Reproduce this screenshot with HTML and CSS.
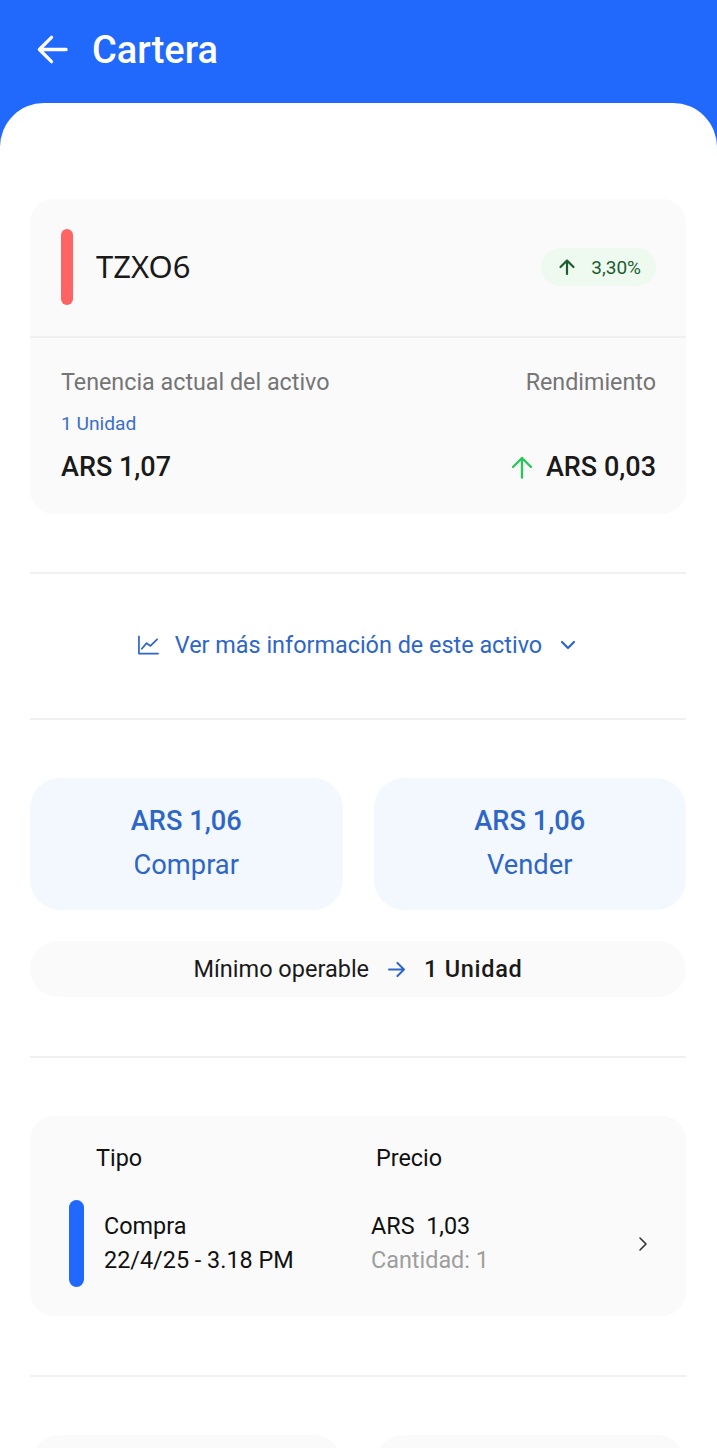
FILE: index.html
```html
<!DOCTYPE html>
<html lang="es">
<head>
<meta charset="UTF-8" />
<meta name="viewport" content="width=device-width, initial-scale=1" />
<title>Cartera</title>
<link rel="stylesheet" href="styles.css">
</head>
<body>
  <header class="topbar">
    <svg class="back-icon" viewBox="0 0 34 34" aria-hidden="true"><path d="M31 17H4M16 4.500 3.500 17 16 29.500" /></svg>
    <h1>Cartera</h1>
  </header>

  <main class="sheet">
    <section class="card holding">
      <div class="holding-head">
        <span class="bar bar-red"></span>
        <span class="ticker">TZXO6</span>
        <span class="badge">
          <svg viewBox="0 0 18 18" aria-hidden="true"><path d="M9 16V2.500M2.500 9 9 2.500 15.500 9" /></svg>
          3,30%
        </span>
      </div>
      <div class="holding-body">
        <div class="holding-col">
          <span class="muted-label">Tenencia actual del activo</span>
          <span class="units">1 Unidad</span>
          <span class="amount">ARS 1,07</span>
        </div>
        <div class="holding-col holding-col-right">
          <span class="muted-label">Rendimiento</span>
          <span class="amount">
            <svg class="gain-icon" viewBox="0 0 22 22" aria-hidden="true"><path d="M11 21.500V2M2 11 11 2 20 11" /></svg>
            ARS 0,03
          </span>
        </div>
      </div>
    </section>

    <hr class="divider">

    <div class="more-info">
      <svg class="chart-icon" viewBox="0 0 22 20" aria-hidden="true"><path d="M1 1V19H21M4 14 9 8 13 11 20 4" /></svg>
      <span>Ver más información de este activo</span>
      <svg class="chevron-down" viewBox="0 0 16 10" aria-hidden="true"><path d="M2 2 8 8 14 2" /></svg>
    </div>

    <hr class="divider divider-flush">

    <div class="actions">
      <div class="action">
        <span class="action-price">ARS 1,06</span>
        <span class="action-label">Comprar</span>
      </div>
      <div class="action">
        <span class="action-price">ARS 1,06</span>
        <span class="action-label">Vender</span>
      </div>
    </div>

    <div class="minimum">
      <span>Mínimo operable</span>
      <svg viewBox="0 0 18 16" aria-hidden="true"><path d="M1 8H17M10 1 17 8 10 15" /></svg>
      <strong>1 Unidad</strong>
    </div>

    <hr class="divider divider-wide">

    <section class="card orders">
      <div class="orders-head">
        <span class="col-type">Tipo</span>
        <span>Precio</span>
      </div>
      <div class="order-row">
        <span class="bar bar-blue"></span>
        <div class="order-type">
          <span>Compra</span>
          <span>22/4/25 - 3.18 PM</span>
        </div>
        <div class="order-price">
          <span>ARS&nbsp; 1,03</span>
          <span class="qty">Cantidad: 1</span>
        </div>
        <svg class="chevron-right" viewBox="0 0 10 16" aria-hidden="true"><path d="M2 2 8 8 2 14" /></svg>
      </div>
    </section>

    <hr class="divider divider-wide">

    <div class="actions">
      <div class="action action-grey"></div>
      <div class="action action-grey"></div>
    </div>
  </main>
</body>
</html>
```

FILE: styles.css
```css
* {
  box-sizing: border-box;
}
html,
body {
  height: 1448px;
  overflow: hidden;
}
body {
  margin: 0;
  background: #2168fd;
  font-family: Roboto, 'Liberation Sans', sans-serif;
  color: #1a1a1a;
}
svg {
  fill: none;
  stroke: currentColor;
  stroke-linecap: round;
  stroke-linejoin: round;
}

/* Top bar */
.topbar {
  height: 103px;
  padding: 0 0 4px 36px;
  display: flex;
  align-items: center;
  gap: 23px;
  color: white;
}
.topbar h1 {
  margin: 0;
  font-size: 38px;
  font-weight: 500;
}
.back-icon {
  width: 33px;
  height: 33px;
  stroke-width: 3.4;
}

.sheet {
  height: 1345px;
  overflow: hidden;
  padding: 96px 31px 0 30px;
  background: white;
  border-radius: 44px 44px 0 0;
}
.card {
  background: #fafafa;
  border-radius: 24px;
}
.bar {
  display: block;
  flex: none;
  border-radius: 8px;
}
.bar-red {
  width: 12px;
  height: 76px;
  background: #ff6464;
}
.bar-blue {
  width: 15px;
  height: 87px;
  background: #2168fd;
}

/* Holding card */
.holding {
  height: 315px;
}
.holding-head {
  height: 139px;
  padding: 0 30px 1px 31px;
  display: flex;
  align-items: center;
  border-bottom: 2px solid #f0f0f0;
}
.ticker {
  margin: 0 0 2px 23px;
  font-family: 'Noto Sans', sans-serif;
  font-size: 31px;
  color: #1a1a1a;
}
.badge {
  margin-left: auto;
  height: 38px;
  padding: 0 15px 0 17px;
  display: flex;
  align-items: center;
  gap: 15px;
  background: #eefaf0;
  border-radius: 19px;
  font-size: 19px;
  color: #1d5c32;
}
.badge svg {
  width: 18px;
  height: 18px;
  stroke-width: 2.2;
}
.holding-body {
  padding: 29px 30px 0 31px;
  display: flex;
  justify-content: space-between;
}
.holding-col {
  display: flex;
  flex-direction: column;
}
.holding-col-right {
  align-items: flex-end;
  justify-content: space-between;
}
.muted-label {
  font-size: 23.300px;
  line-height: 30px;
  color: #757575;
}
.units {
  margin-top: 15px;
  font-size: 19.200px;
  line-height: 24px;
  color: #3a6fca;
}
.amount {
  margin-top: 14px;
  display: flex;
  align-items: center;
  gap: 13px;
  font-size: 27px;
  line-height: 34px;
  font-weight: 500;
}
.gain-icon {
  width: 22px;
  height: 24px;
  color: #2dc45e;
  stroke-width: 2.4;
}

.divider {
  margin: 58px 0 0;
  border: 0;
  border-top: 2px solid #f0f0f0;
}
.divider-flush {
  margin-top: 0;
}
.divider-wide {
  margin-top: 59px;
}

/* More info link */
.more-info {
  height: 144px;
  padding: 0 2px 2px 0;
  display: flex;
  align-items: center;
  justify-content: center;
  gap: 16px;
  font-size: 23.400px;
  color: #2e66c8;
}
.chart-icon {
  width: 21px;
  height: 20px;
  stroke-width: 1.8;
}
.chevron-down {
  margin-left: 2px;
  width: 16px;
  height: 10px;
  stroke-width: 2.2;
}

/* Buy / sell */
.actions {
  margin-top: 58px;
  display: grid;
  grid-template-columns: 1fr 1fr;
  gap: 31px;
}
.action {
  height: 132px;
  padding-bottom: 3px;
  display: flex;
  flex-direction: column;
  align-items: center;
  justify-content: center;
  gap: 12px;
  background: #f3f8ff;
  border-radius: 30px;
  color: #2e66c8;
}
.action-grey {
  background: #fafafa;
}
.action-price {
  font-size: 27.200px;
  font-weight: 500;
}
.action-label {
  font-size: 27.300px;
}
.minimum {
  margin-top: 31px;
  height: 56px;
  display: flex;
  align-items: center;
  justify-content: center;
  gap: 19px;
  background: #fafafa;
  border-radius: 28px;
  font-size: 23.500px;
}
.minimum svg {
  width: 17px;
  height: 15px;
  color: #2e66c8;
  stroke-width: 2.1;
}
.minimum strong {
  font-weight: 500;
  letter-spacing: 0.7px;
}

/* Orders */
.orders {
  margin-top: 58px;
  height: 200px;
  padding: 26px 38px 0 39px;
  font-size: 23.400px;
}
.orders-head {
  display: flex;
  line-height: 32px;
  color: #111;
}
.col-type {
  margin-left: 27px;
  width: 280px;
}
.order-row {
  margin-top: 26px;
  display: flex;
  align-items: center;
  line-height: 34px;
  color: #111;
}
.order-type {
  margin-left: 20px;
  width: 267px;
  padding-bottom: 2px;
  display: flex;
  flex-direction: column;
}
.order-price {
  padding-bottom: 2px;
  display: flex;
  flex-direction: column;
}
.qty {
  color: #9e9e9e;
}
.chevron-right {
  margin-left: auto;
  width: 10px;
  height: 16px;
  color: #333;
  stroke-width: 1.6;
}
```
